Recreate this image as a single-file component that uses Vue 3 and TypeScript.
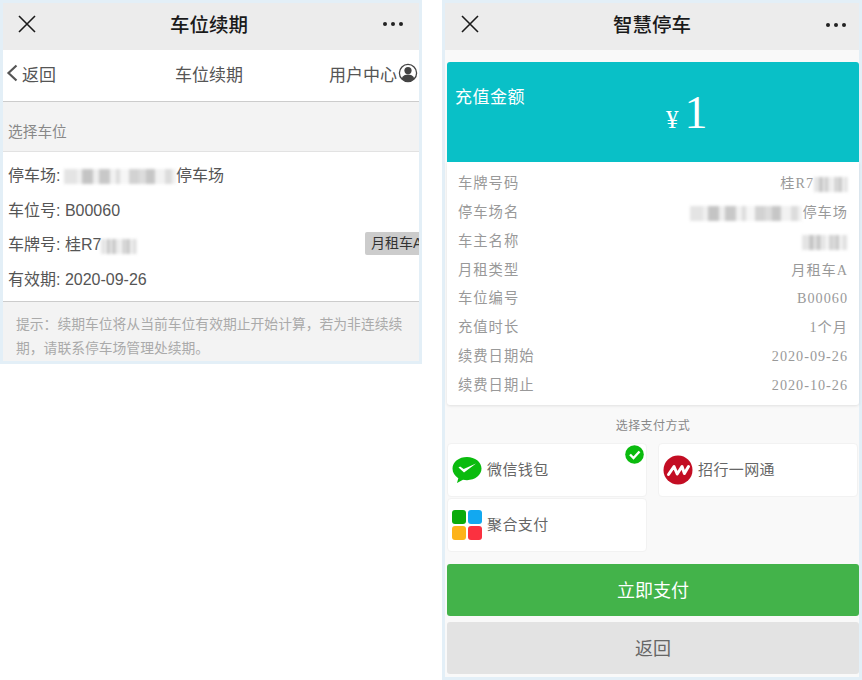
<script setup lang="ts">
const rows: { label: string; value?: string; blur?: number; suffix?: string }[] = [
  { label: '车牌号码', value: '桂R7', blur: 34 },
  { label: '停车场名', blur: 112, suffix: '停车场' },
  { label: '车主名称', blur: 46 },
  { label: '月租类型', value: '月租车A' },
  { label: '车位编号', value: 'B00060' },
  { label: '充值时长', value: '1个月' },
  { label: '续费日期始', value: '2020-09-26' },
  { label: '续费日期止', value: '2020-10-26' },
]
</script>

<template>
  <div class="page">
    <section class="frame left">
      <header class="wx-bar">
        <svg class="close" width="20" height="20" viewBox="0 0 20 20"><path d="M2 2L18 18M18 2L2 18" stroke="#1a1a1a" stroke-width="1.6" fill="none" /></svg>
        <span class="wx-title">车位续期</span>
        <span class="dots"><i></i><i></i><i></i></span>
      </header>
      <nav class="nav">
        <span class="back">
          <svg width="12" height="18" viewBox="0 0 12 18"><path d="M10.5 1.5L2.5 9L10.5 16.5" stroke="#555" stroke-width="2.2" fill="none" /></svg>
          返回
        </span>
        <span class="nav-title">车位续期</span>
        <span class="user">
          用户中心
          <svg width="20" height="20" viewBox="0 0 20 20">
            <circle cx="10" cy="10" r="8.6" fill="#fff" stroke="#444" stroke-width="1.3" />
            <circle cx="10" cy="7.6" r="3.6" fill="#444" />
            <path d="M3.6 15.4C5 12.4 7.4 11.6 10 11.6S15 12.4 16.4 15.4C14.8 17.4 12.6 18.2 10 18.2S5.2 17.4 3.6 15.4Z" fill="#444" />
          </svg>
        </span>
      </nav>
      <div class="section-head">选择车位</div>
      <div class="info">
        <div class="info-row">停车场: <span class="blur lot"></span>停车场</div>
        <div class="info-row">车位号: B00060</div>
        <div class="info-row between">
          <span>车牌号: 桂R7<span class="blur plate"></span></span>
          <span class="tag">月租车A</span>
        </div>
        <div class="info-row">有效期: 2020-09-26</div>
      </div>
      <p class="hint">提示：续期车位将从当前车位有效期止开始计算，若为非连续续期，请联系停车场管理处续期。</p>
    </section>

    <section class="frame right">
      <header class="wx-bar">
        <svg class="close" width="20" height="20" viewBox="0 0 20 20"><path d="M2 2L18 18M18 2L2 18" stroke="#1a1a1a" stroke-width="1.6" fill="none" /></svg>
        <span class="wx-title">智慧停车</span>
        <span class="dots"><i></i><i></i><i></i></span>
      </header>
      <div class="content">
        <div class="amount">
          <div class="amount-label">充值金额</div>
          <div class="amount-value"><span class="yen">¥</span><span class="num">1</span></div>
        </div>
        <div class="detail">
          <div v-for="row in rows" :key="row.label" class="detail-row">
            <span>{{ row.label }}</span>
            <span class="detail-value">
              {{ row.value }}<span v-if="row.blur" class="blur" :style="{ width: row.blur + 'px' }"></span>{{ row.suffix }}
            </span>
          </div>
        </div>
        <div class="pay-title">选择支付方式</div>
        <div class="pay-grid">
          <div class="pay-card">
            <svg width="30" height="28" viewBox="0 0 30 28">
              <path d="M15 1C7 1 .5 5.8.5 12.6c0 4 2.3 7.4 5.8 9.6L5 27l6-3.2c1.3.3 2.6.4 4 .4 8 0 14.5-5 14.5-11.6S23 1 15 1Z" fill="#0abb0e" />
              <path d="M6.5 11.5l1.6-1 3.6 2.4L24 7.6 12 16.6Z" fill="#fff" />
            </svg>
            <span class="pay-name">微信钱包</span>
            <svg class="check" width="19" height="19" viewBox="0 0 19 19">
              <circle cx="9.5" cy="9.5" r="9.3" fill="#0abb0e" />
              <path d="M5 9.5L8.5 13L14.5 6.5" stroke="#fff" stroke-width="2.4" fill="none" />
            </svg>
          </div>
          <div class="pay-card">
            <svg width="30" height="30" viewBox="0 0 30 30">
              <circle cx="15" cy="15" r="14.5" fill="#c30d23" />
              <path d="M5.5 19.5L11 11.5L14.2 19L19 11.5L21.4 18.5L25.5 11.5" stroke="#fff" stroke-width="3" stroke-linecap="round" stroke-linejoin="round" fill="none" />
            </svg>
            <span class="pay-name">招行一网通</span>
          </div>
          <div class="pay-card">
            <span class="tiles">
              <i class="t1"></i><i class="t2"></i><i class="t3"></i><i class="t4"></i>
            </span>
            <span class="pay-name">聚合支付</span>
          </div>
        </div>
        <button class="btn primary"><span>立即支付</span></button>
        <button class="btn secondary"><span>返回</span></button>
      </div>
    </section>
  </div>
</template>

<style>
html, body { margin: 0; background: #fff; }
</style>

<style scoped>
.page {
  width: 862px;
  height: 680px;
  display: flex;
  align-items: flex-start;
  gap: 20px;
  overflow: hidden;
  font-family: "Liberation Sans", "Noto Sans CJK SC", sans-serif;
}
.frame {
  box-sizing: border-box;
  border: 3px solid #e3eff7;
  width: 420px;
  flex: none;
}
.left { width: 422px; height: 364px; background: #fff; display: flex; flex-direction: column; }
.right { height: 680px; background: #f9f9f9; display: flex; flex-direction: column; }
.wx-bar {
  height: 47px;
  box-sizing: border-box;
  padding-bottom: 6px;
  flex: none;
  background: #ececec;
  display: flex;
  align-items: center;
  justify-content: center;
  position: relative;
}
.left .wx-bar { padding-right: 4px; }
.close { position: absolute; left: 14px; top: 11px; }
.right .close { left: 15px; }
.wx-title { font-size: 19.5px; font-weight: 500; color: #1a1a1a; }
.dots { position: absolute; right: 16px; top: 19px; display: flex; gap: 4px; }
.right .dots { right: 13px; top: 20px; }
.dots i { width: 4px; height: 4px; background: #222; border-radius: 50%; }
.nav {
  height: 52px;
  box-sizing: border-box;
  border-bottom: 1px solid #ccc;
  padding-bottom: 5px;
  display: flex;
  align-items: center;
  justify-content: space-between;
  font-size: 17px;
  color: #555;
  position: relative;
  flex: none;
}
.back { display: flex; align-items: center; gap: 4px; padding-left: 3px; width: 100px; }
.nav-title { position: absolute; left: 172px; }
.user { display: flex; align-items: center; gap: 1px; padding-right: 1px; }
.section-head {
  height: 50px;
  box-sizing: border-box;
  flex: none;
  background: #f3f3f3;
  border-bottom: 1px solid #e2e2e2;
  padding: 20px 0 0 5px;
  font-size: 14.7px;
  line-height: 20px;
  color: #888;
}
.info { height: 150px; box-sizing: border-box; padding-top: 7px; border-bottom: 1px solid #ccc; flex: none; }
.info-row {
  height: 34.6px;
  line-height: 34px;
  padding-left: 5px;
  font-size: 16px;
  color: #555;
  display: flex;
  align-items: center;
  white-space: pre;
}
.between { justify-content: space-between; }
.tag {
  background: #ccc;
  color: #333;
  font-size: 14px;
  line-height: 23px;
  height: 23px;
  box-sizing: border-box;
  padding-left: 6px;
  margin-bottom: 4px;
  border-radius: 2px 0 0 2px;
  width: 54px;
  white-space: nowrap;
  overflow: hidden;
}
.hint {
  margin: 0;
  flex: 1;
  background: #f3f3f3;
  padding: 11px 10px 0 13px;
  font-size: 13.8px;
  line-height: 24px;
  color: #aaa;
}
.blur {
  display: inline-block;
  vertical-align: middle;
  height: 15px;
  background-color: #f1f1f1;
  background-image: linear-gradient(90deg, #e4e4e4 0 12%, #f0f0f0 12% 16%, #c4c4c4 16% 26%, #efefef 26% 31%, #c8c8c8 31% 41%, #f2f2f2 41% 46%, #dcdcdc 46% 50%, #f6f6f6 50% 58%, #d2d2d2 58% 67%, #dcdcdc 67% 73%, #c6c6c6 73% 81%, #f2f2f2 81% 90%, #dcdcdc 90% 96%, #f2f2f2 96%);
  filter: blur(1.8px);
  margin: 0;
}
.lot { width: 112px; margin-left: -1px; }
.plate { width: 36px; }
.content { padding: 12px 0 0 2px; display: flex; flex-direction: column; flex: 1; }
.amount {
  height: 100px;
  background: #09c0c7;
  border-radius: 3px 3px 0 0;
  color: #fff;
  position: relative;
  flex: none;
}
.amount-label { position: absolute; left: 8px; top: 25px; font-size: 17px; line-height: 22px; letter-spacing: .5px; }
.amount-value { position: absolute; left: 219px; top: 23px; display: flex; align-items: baseline; gap: 6px; font-family: "Liberation Serif", "Noto Sans CJK SC", serif; line-height: 56px; }
.yen { font-size: 25px; }
.num { font-size: 46px; }
.detail {
  height: 243px;
  box-sizing: border-box;
  padding: 7px 12px 0 12px;
  background: #fff;
  box-shadow: 0 1px 3px rgba(0, 0, 0, .1);
  border-radius: 0 0 3px 3px;
  flex: none;
  font-family: "Liberation Serif", "Noto Sans CJK SC", serif;
}
.detail-row {
  display: flex;
  justify-content: space-between;
  height: 28.85px;
  line-height: 28px;
  font-size: 14.2px;
  letter-spacing: 1px;
  color: #999;
}
.detail-row > span:first-child { margin-left: -1px; font-size: 14.3px; }
.detail-value { white-space: pre; margin-right: -1px; }
.pay-title { text-align: center; font-size: 12px; line-height: 16px; letter-spacing: .4px; color: #888; margin-top: 12px; flex: none; font-family: "Noto Sans CJK SC", sans-serif; }
.pay-grid { display: grid; grid-template-columns: 200px 200px; column-gap: 11px; row-gap: 1px; margin: 10px 0 0 0; flex: none; }
.pay-card {
  height: 54px;
  box-sizing: border-box;
  background: #fff;
  border: 1px solid #f2f2f2;
  border-radius: 4px;
  display: flex;
  align-items: center;
  gap: 5px;
  padding-left: 4px;
  font-size: 15px;
  letter-spacing: .4px;
  color: #666;
  position: relative;
}
.pay-name { margin-bottom: 3px; }
.check { position: absolute; top: 1px; right: 2px; }
.tiles { display: grid; grid-template-columns: 14px 14px; gap: 2px; width: 30px; }
.tiles i { height: 14px; border-radius: 3px; }
.t1 { background: #0aab0a; }
.t2 { background: #12a8f0; }
.t3 { background: #fdb31a; }
.t4 { background: #fb3140; }
.btn {
  border: 0;
  border-radius: 3px;
  height: 52px;
  font-family: inherit;
  font-size: 18px;
  flex: none;
  padding: 0 0 2px;
  width: 412px;
}
.primary { background: #43b34a; color: #fff; margin-top: 12px; }
.secondary { background: #e3e3e3; color: #666; margin-top: 6px; }
</style>
